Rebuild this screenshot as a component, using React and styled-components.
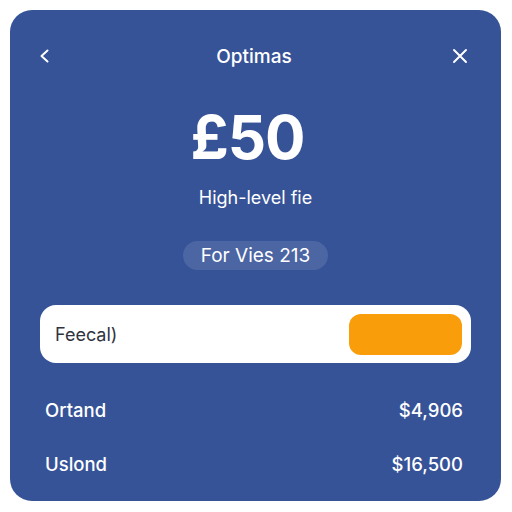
import styled, { createGlobalStyle } from 'styled-components';

const Global = createGlobalStyle`
  body {
    margin: 0;
    background: #ffffff;
    font-family: Inter, "Noto Sans", sans-serif;
  }
`;

const Card = styled.div`
  box-sizing: border-box;
  margin: 10px;
  width: 491px;
  height: 491px;
  border-radius: 22px;
  background: #365398;
  padding: 30px 30px 0;
  display: flex;
  flex-direction: column;
  align-items: center;
  color: #ffffff;
`;

const Header = styled.div`
  width: 100%;
  height: 32px;
  display: flex;
  align-items: center;
  justify-content: space-between;
  padding: 0 3px 0 0;
  box-sizing: border-box;
`;

const IconBtn = styled.div`
  width: 16px;
  height: 32px;
  display: flex;
  align-items: center;
  justify-content: center;
`;

const Title = styled.div`
  font-size: 19px;
  font-weight: 500;
`;

const Amount = styled.div`
  margin: 32px 16px 0 0;
  font-size: 60px;
  line-height: 66px;
  font-weight: 700;
  letter-spacing: -1px;
`;

const Subtitle = styled.div`
  margin-top: 16px;
  font-size: 18px;
  line-height: 24px;
`;

const Pill = styled.div`
  margin-top: 31px;
  height: 29px;
  padding: 0 18px;
  border-radius: 15px;
  background: rgba(255, 255, 255, 0.11);
  font-size: 19px;
  display: flex;
  align-items: center;
`;

const Bar = styled.div`
  box-sizing: border-box;
  margin-top: 35px;
  width: 100%;
  height: 58px;
  border-radius: 16px;
  background: #ffffff;
  display: flex;
  align-items: center;
  justify-content: space-between;
  padding: 0 9px 0 15px;
  color: #2f3340;
  font-size: 18px;
`;

const ActionButton = styled.div`
  width: 113px;
  height: 41px;
  border-radius: 12px;
  background: #f99d0a;
`;

const Rows = styled.div`
  margin-top: 20px;
  width: 100%;
`;

const Row = styled.div`
  box-sizing: border-box;
  height: 54px;
  padding: 0 8px 0 5px;
  display: flex;
  align-items: center;
  justify-content: space-between;
  font-size: 18.5px;
  font-weight: 500;
`;

const rows = [
  { label: 'Ortand', value: '$4,906' },
  { label: 'Uslond', value: '$16,500' },
];

export default function App() {
  return (
    <>
      <Global />
      <Card>
        <Header>
          <IconBtn>
            <svg width="16" height="16" viewBox="0 0 16 16" fill="none" stroke="#fff" strokeWidth="2" strokeLinecap="round" strokeLinejoin="round">
              <path d="M7.5 2.5 L1.5 8 L7.5 13.5" />
            </svg>
          </IconBtn>
          <Title>Optimas</Title>
          <IconBtn>
            <svg width="16" height="16" viewBox="0 0 16 16" fill="none" stroke="#fff" strokeWidth="2" strokeLinecap="round">
              <path d="M2 2 L14 14 M14 2 L2 14" />
            </svg>
          </IconBtn>
        </Header>
        <Amount>£50</Amount>
        <Subtitle>High-level fie</Subtitle>
        <Pill>For Vies 213</Pill>
        <Bar>
          <span>Feecal)</span>
          <ActionButton />
        </Bar>
        <Rows>
          {rows.map((r) => (
            <Row key={r.label}>
              <span>{r.label}</span>
              <span>{r.value}</span>
            </Row>
          ))}
        </Rows>
      </Card>
    </>
  );
}
